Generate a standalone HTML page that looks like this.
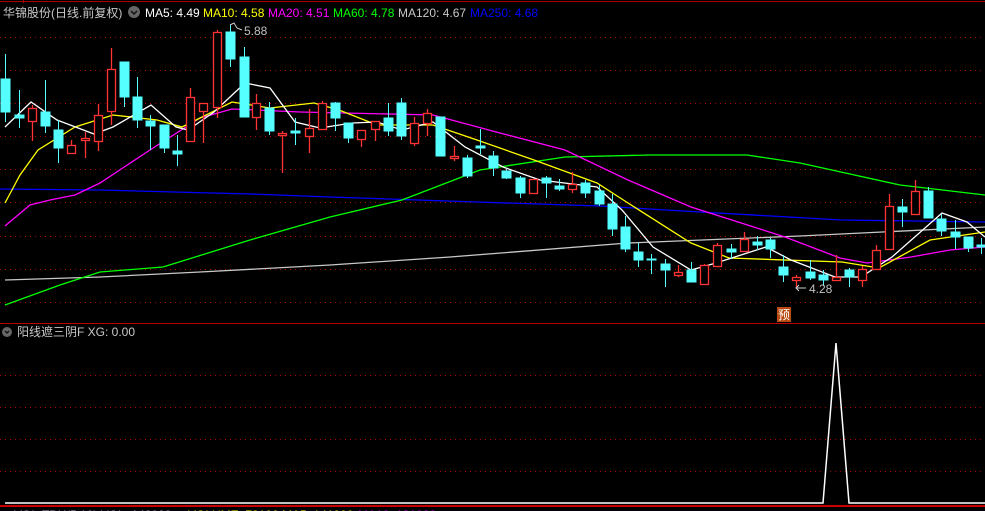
<!DOCTYPE html>
<html><head><meta charset="utf-8"><style>
html,body{margin:0;padding:0;background:#000;width:985px;height:511px;overflow:hidden}
svg{display:block}
text{font-family:"Liberation Sans","Noto Sans CJK SC",sans-serif}
</style></head><body>
<svg width="985" height="511" viewBox="0 0 985 511" xmlns="http://www.w3.org/2000/svg">
<rect width="985" height="511" fill="#000"/>
<line x1="0" y1="1.5" x2="985" y2="1.5" stroke="#a00" stroke-width="1"/>
<line x1="23.5" y1="0" x2="23.5" y2="3" stroke="#a00"/>
<g stroke="#a00" stroke-width="1" stroke-dasharray="1,4">
<line x1="0" y1="37.5" x2="985" y2="37.5"/><line x1="0" y1="70.5" x2="985" y2="70.5"/>
<line x1="0" y1="103.5" x2="985" y2="103.5"/><line x1="0" y1="136.5" x2="985" y2="136.5"/>
<line x1="0" y1="169.5" x2="985" y2="169.5"/><line x1="0" y1="202.5" x2="985" y2="202.5"/>
<line x1="0" y1="236.5" x2="985" y2="236.5"/><line x1="0" y1="269.5" x2="985" y2="269.5"/>
<line x1="0" y1="302.5" x2="985" y2="302.5"/>
<line x1="0" y1="375.5" x2="985" y2="375.5"/><line x1="0" y1="407.5" x2="985" y2="407.5"/>
<line x1="0" y1="439.5" x2="985" y2="439.5"/><line x1="0" y1="471.5" x2="985" y2="471.5"/>
</g>
<line x1="0" y1="323.5" x2="985" y2="323.5" stroke="#b00"/>
<line x1="0" y1="506" x2="985" y2="506" stroke="#c00" stroke-width="2"/>

<g fill="none" stroke-width="1.3">
<polyline stroke="#00f" points="0,189 100,190 250,194 330,197 477,202 600,206 700,212 842,220 985,222"/>
<polyline stroke="#c8c8c8" points="5,280 100,277 200,272 330,265 450,257 628,243 800,236 985,227"/>
<polyline stroke="#0f0" points="5,305 60,285 100,272 163,267 250,240 330,217 402,200 480,170 565,157 650,155 747,155 800,163 900,185 985,195"/>
<polyline stroke="#f0f" points="5,226 30,205 50,200 75,195 100,183 150,150 200,118 232,109 300,112 433,115 500,133 565,150 628,180 691,207 785,237 840,258 867,263 911,257 950,250 985,247"/>
<polyline stroke="#ff0" points="5,203 20,175 38,150 75,127 113,115 157,120 182,127 232,102 270,108 314,103 339,110 377,125 433,125 477,140 534,160 597,183 628,203 691,243 729,258 842,262 879,268 930,240 985,232"/>
<polyline stroke="#fff" points="5,127 31,102 57,120 94,134 113,127 151,105 176,127 188,130 214,112 245,83 270,88 295,122 320,128 352,123 377,122 402,130 433,122 465,147 503,167 540,180 597,187 622,210 653,247 691,270 716,263 766,247 791,260 835,277 861,277 892,257 942,213 967,222 985,237"/>
</g>

<g stroke="#55ffff" fill="#55ffff" stroke-width="1">
<line x1="5.5" y1="54" x2="5.5" y2="122"/><rect x="1" y="79" width="9" height="33"/>
<line x1="19.5" y1="90" x2="19.5" y2="128"/><rect x="15" y="115" width="9" height="3"/>
<line x1="45.5" y1="80" x2="45.5" y2="133"/><rect x="41" y="112" width="9" height="14"/>
<line x1="58.5" y1="120" x2="58.5" y2="163"/><rect x="54" y="130" width="9" height="18"/>
<line x1="124.5" y1="62" x2="124.5" y2="107"/><rect x="120" y="62" width="9" height="35"/>
<line x1="137.5" y1="77" x2="137.5" y2="128"/><rect x="133" y="97" width="9" height="23"/>
<line x1="150.5" y1="115" x2="150.5" y2="150"/><rect x="146" y="121" width="9" height="5"/>
<line x1="164.5" y1="125" x2="164.5" y2="153"/><rect x="160" y="125" width="9" height="23"/>
<line x1="177.5" y1="135" x2="177.5" y2="166"/><rect x="173" y="151" width="9" height="3"/>
<line x1="230.5" y1="25" x2="230.5" y2="67"/><rect x="226" y="32" width="9" height="27"/>
<line x1="244.5" y1="47" x2="244.5" y2="117"/><rect x="240" y="57" width="9" height="60"/>
<line x1="269.5" y1="102" x2="269.5" y2="135"/><rect x="265" y="108" width="9" height="23"/>
<line x1="295.5" y1="118" x2="295.5" y2="145"/><rect x="291" y="131" width="9" height="2"/>
<line x1="335.5" y1="102" x2="335.5" y2="131"/><rect x="331" y="103" width="9" height="15"/>
<line x1="348.5" y1="123" x2="348.5" y2="143"/><rect x="344" y="123" width="9" height="15"/>
<line x1="388.5" y1="103" x2="388.5" y2="136"/><rect x="384" y="118" width="9" height="13"/>
<line x1="401.5" y1="98" x2="401.5" y2="140"/><rect x="397" y="103" width="9" height="33"/>
<line x1="440.5" y1="117" x2="440.5" y2="156"/><rect x="436" y="117" width="9" height="39"/>
<line x1="467.5" y1="155" x2="467.5" y2="178"/><rect x="463" y="158" width="9" height="18"/>
<line x1="480.5" y1="129" x2="480.5" y2="154"/><rect x="476" y="146" width="9" height="2"/>
<line x1="493.5" y1="151" x2="493.5" y2="176"/><rect x="489" y="156" width="9" height="12"/>
<line x1="506.5" y1="169" x2="506.5" y2="179"/><rect x="502" y="171" width="9" height="7"/>
<line x1="520.5" y1="176" x2="520.5" y2="198"/><rect x="516" y="178" width="9" height="15"/>
<line x1="546.5" y1="176" x2="546.5" y2="198"/><rect x="542" y="178" width="9" height="5"/>
<line x1="559.5" y1="179" x2="559.5" y2="191"/><rect x="555" y="186" width="9" height="3"/>
<line x1="585.5" y1="180" x2="585.5" y2="198"/><rect x="581" y="183" width="9" height="10"/>
<line x1="599.5" y1="185" x2="599.5" y2="206"/><rect x="595" y="191" width="9" height="13"/>
<line x1="612.5" y1="194" x2="612.5" y2="236"/><rect x="608" y="204" width="9" height="25"/>
<line x1="625.5" y1="216" x2="625.5" y2="252"/><rect x="621" y="227" width="9" height="22"/>
<line x1="638.5" y1="243" x2="638.5" y2="267"/><rect x="634" y="252" width="9" height="8"/>
<line x1="651.5" y1="254" x2="651.5" y2="274"/><rect x="647" y="259" width="9" height="1"/>
<line x1="665.5" y1="259" x2="665.5" y2="287"/><rect x="661" y="264" width="9" height="6"/>
<line x1="691.5" y1="262" x2="691.5" y2="282"/><rect x="687" y="270" width="9" height="12"/>
<line x1="731.5" y1="244" x2="731.5" y2="259"/><rect x="727" y="249" width="9" height="3"/>
<line x1="757.5" y1="236" x2="757.5" y2="250"/><rect x="753" y="242" width="9" height="3"/>
<line x1="770.5" y1="238" x2="770.5" y2="258"/><rect x="766" y="240" width="9" height="9"/>
<line x1="783.5" y1="255" x2="783.5" y2="282"/><rect x="779" y="267" width="9" height="8"/>
<line x1="810.5" y1="260" x2="810.5" y2="280"/><rect x="806" y="272" width="9" height="6"/>
<line x1="823.5" y1="270" x2="823.5" y2="286"/><rect x="819" y="275" width="9" height="5"/>
<line x1="849.5" y1="268" x2="849.5" y2="287"/><rect x="845" y="270" width="9" height="7"/>
<line x1="902.5" y1="199" x2="902.5" y2="227"/><rect x="898" y="207" width="9" height="5"/>
<line x1="928.5" y1="187" x2="928.5" y2="218"/><rect x="924" y="191" width="9" height="27"/>
<line x1="941.5" y1="214" x2="941.5" y2="236"/><rect x="937" y="219" width="9" height="12"/>
<line x1="955.5" y1="220" x2="955.5" y2="249"/><rect x="951" y="232" width="9" height="5"/>
<line x1="968.5" y1="237" x2="968.5" y2="252"/><rect x="964" y="237" width="9" height="11"/>
<line x1="981.5" y1="238" x2="981.5" y2="254"/><rect x="977" y="245" width="8" height="2"/>
</g>
<g stroke="#ff3333" fill="#000" stroke-width="1.3">
<line x1="32.5" y1="105" x2="32.5" y2="141"/><rect x="28.5" y="108.5" width="8" height="13"/>
<line x1="71.5" y1="140" x2="71.5" y2="153"/><rect x="67.5" y="145.5" width="8" height="8"/>
<line x1="85.5" y1="132" x2="85.5" y2="158"/><rect x="81.5" y="138.5" width="8" height="2"/>
<line x1="98.5" y1="104" x2="98.5" y2="151"/><rect x="94.5" y="115.5" width="8" height="26"/>
<line x1="111.5" y1="48" x2="111.5" y2="125"/><rect x="107.5" y="69.5" width="8" height="42"/>
<line x1="190.5" y1="88" x2="190.5" y2="141"/><rect x="186.5" y="97.5" width="8" height="44"/>
<line x1="203.5" y1="103" x2="203.5" y2="143"/><rect x="199.5" y="103.5" width="8" height="8"/>
<line x1="217.5" y1="30" x2="217.5" y2="118"/><rect x="213.5" y="32.5" width="8" height="75"/>
<line x1="256.5" y1="94" x2="256.5" y2="130"/><rect x="252.5" y="103.5" width="8" height="14"/>
<line x1="282.5" y1="131" x2="282.5" y2="173"/><rect x="278.5" y="133.5" width="8" height="2"/>
<line x1="309.5" y1="109" x2="309.5" y2="153"/><rect x="305.5" y="128.5" width="8" height="8"/>
<line x1="322.5" y1="101" x2="322.5" y2="129"/><rect x="318.5" y="103.5" width="8" height="26"/>
<line x1="361.5" y1="130" x2="361.5" y2="147"/><rect x="357.5" y="130.5" width="8" height="9"/>
<line x1="375.5" y1="121" x2="375.5" y2="141"/><rect x="371.5" y="121.5" width="8" height="8"/>
<line x1="414.5" y1="117" x2="414.5" y2="146"/><rect x="410.5" y="123.5" width="8" height="20"/>
<line x1="427.5" y1="109" x2="427.5" y2="136"/><rect x="423.5" y="113.5" width="8" height="10"/>
<line x1="454.5" y1="146" x2="454.5" y2="161"/><rect x="450.5" y="156.5" width="8" height="2"/>
<line x1="533.5" y1="179" x2="533.5" y2="193"/><rect x="529.5" y="179.5" width="8" height="14"/>
<line x1="572.5" y1="172" x2="572.5" y2="193"/><rect x="568.5" y="184.5" width="8" height="5"/>
<line x1="678.5" y1="265" x2="678.5" y2="277"/><rect x="674.5" y="272.5" width="8" height="3"/>
<line x1="704.5" y1="264" x2="704.5" y2="285"/><rect x="700.5" y="265.5" width="8" height="19"/>
<line x1="717.5" y1="243" x2="717.5" y2="267"/><rect x="713.5" y="245.5" width="8" height="21"/>
<line x1="744.5" y1="232" x2="744.5" y2="252"/><rect x="740.5" y="239.5" width="8" height="12"/>
<line x1="796.5" y1="275" x2="796.5" y2="288"/><rect x="792.5" y="277.5" width="8" height="3"/>
<line x1="836.5" y1="255" x2="836.5" y2="281"/><rect x="832.5" y="277.5" width="8" height="3"/>
<line x1="862.5" y1="266" x2="862.5" y2="287"/><rect x="858.5" y="269.5" width="8" height="11"/>
<line x1="876.5" y1="245" x2="876.5" y2="270"/><rect x="872.5" y="250.5" width="8" height="19"/>
<line x1="889.5" y1="194" x2="889.5" y2="250"/><rect x="885.5" y="206.5" width="8" height="43"/>
<line x1="915.5" y1="180" x2="915.5" y2="215"/><rect x="911.5" y="191.5" width="8" height="23"/>
</g>

<polyline points="230,25 234,23 237,28 242,30" fill="none" stroke="#ccc"/>
<text x="244" y="35" font-size="12" fill="#c0c0c0">5.88</text>
<line x1="796" y1="288" x2="806" y2="288" stroke="#ccc"/>
<polyline points="799,285 796,288 799,291" fill="none" stroke="#ccc"/>
<text x="809" y="293" font-size="12" fill="#c0c0c0">4.28</text>
<rect x="777" y="307" width="14" height="15" fill="#b84a10"/>
<text x="778" y="319" font-size="12" fill="#fff">预</text>

<text x="3" y="17" font-size="12" fill="#c8c8c8">华锦股份(日线.前复权)</text>
<circle cx="134" cy="12" r="6" fill="#666"/>
<polyline points="131,11 134,14 137,11" fill="none" stroke="#111" stroke-width="1.5"/>
<text y="17" font-size="12"><tspan x="145" fill="#fff">MA5: 4.49</tspan><tspan x="203" fill="#ff0">MA10: 4.58</tspan><tspan x="268" fill="#f0f">MA20: 4.51</tspan><tspan x="333" fill="#0f0">MA60: 4.78</tspan><tspan x="398" fill="#c8c8c8">MA120: 4.67</tspan><tspan x="470" fill="#00f">MA250: 4.68</tspan></text>

<circle cx="7" cy="332" r="5" fill="#666"/>
<polyline points="5,331 7,333 9,331" fill="none" stroke="#111" stroke-width="1.3"/>
<text x="17" y="336" font-size="12" fill="#c8c8c8">阳线遮三阴F  XG: 0.00</text>
<polyline points="5,503 823,503 836,343 849,503 985,503" fill="none" stroke="#fff" stroke-width="1.5"/>
<text y="519" font-size="12"><tspan x="14" fill="#bbb">VOL-TDX(5,10) VOL: 142000</tspan><tspan x="188" fill="#ff0">VOLUME: 72100 MA5: 141000</tspan><tspan x="358" fill="#f0f">MA10: 131000</tspan></text>
</svg>
</body></html>
